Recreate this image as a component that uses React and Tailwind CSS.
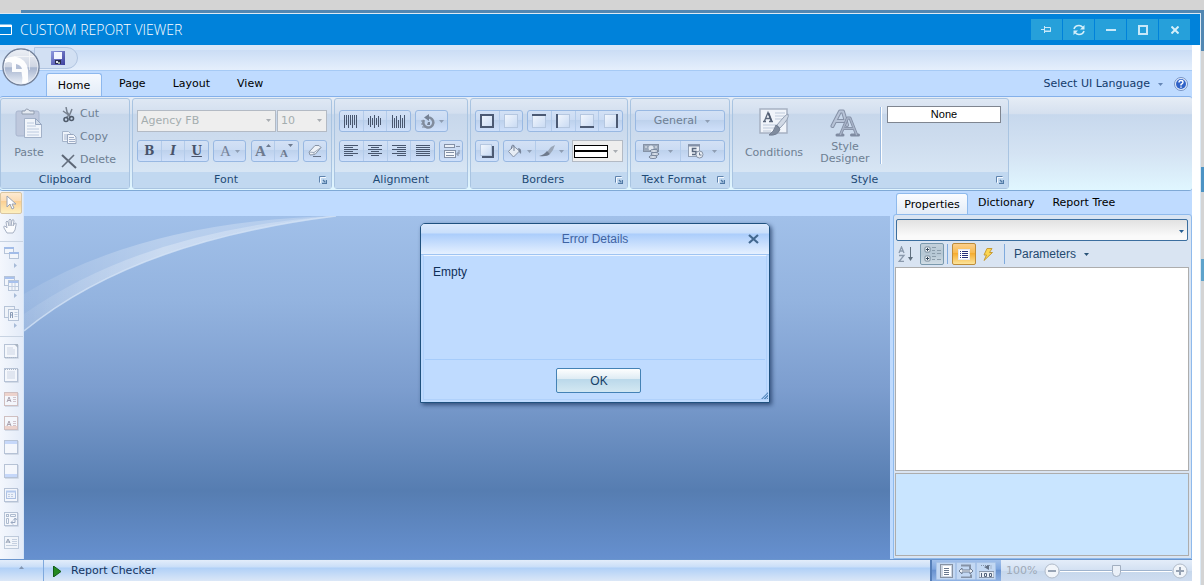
import React from "react";

const VERDANA = "font-['DejaVu_Sans',sans-serif]";
const PANEL = "bg-[linear-gradient(180deg,#dfe8f4_0%,#d3dfef_16%,#c7d7eb_17%,#cddcee_45%,#dceaf7_100%)]";

function Svg({ w, h, label, children, className = "" }) {
  return (
    <svg width={w} height={h} viewBox={`0 0 ${w} ${h}`} className={`shrink-0 ${className}`} aria-hidden={label ? undefined : true} aria-label={label}>
      {children}
    </svg>
  );
}

function Caret({ color = "#8e9db3" }) {
  return (
    <Svg w={5} h={3}>
      <path d="M0 0h5L2.500 3z" fill={color} />
    </Svg>
  );
}

function Launcher() {
  return (
    <button aria-label="More options" className="absolute right-1 flex size-2 items-center justify-center">
      <Svg w={8} h={8}>
        <path d="M.5 6.500v-6h6" fill="none" stroke="#5f83ad" />
        <path d="M1.500 7V1.500H7" fill="none" stroke="#f4f9ff" />
        <path d="M4 4l2 2M7.500 4v3.500H3" fill="none" stroke="#5079a5" strokeWidth="1.400" />
      </Svg>
    </button>
  );
}

function Group({ title, launcher, className = "", children }) {
  return (
    <section aria-label={title} className={`flex shrink-0 flex-col rounded-[3px] border border-[#a9c4e1] ${PANEL} ${className}`}>
      <div className="flex grow px-1">{children}</div>
      <div className={`relative flex h-4 items-center justify-center bg-[#c1d8f0] text-[11px] leading-4 text-[#1f4a75] ${launcher ? "pr-3" : ""}`}>
        {title}
        {launcher && <Launcher />}
      </div>
    </section>
  );
}

function Rows({ children }) {
  return <div className="flex grow flex-col gap-2 pt-[11px] pb-[10px]">{children}</div>;
}

function Cluster({ items, className = "" }) {
  return (
    <div className={`flex h-[22px] divide-x divide-[#b3cbea] rounded-[3px] border border-[#98b8e2] bg-[linear-gradient(180deg,#d3e1f5_0%,#cadbf3_45%,#bdd1ec_46%,#cfe0fa_100%)] ${className}`}>
      {items.map(([label, node]) => (
        <button key={label} aria-label={label} className="flex flex-1 items-center justify-center gap-1">
          {node}
        </button>
      ))}
    </div>
  );
}

function DisabledSelect({ label, value, className }) {
  return (
    <div className={`relative flex h-[22px] border border-[#b3bac4] bg-[#eeeeee] ${className}`}>
      <select aria-label={label} disabled className="w-full appearance-none bg-transparent px-[3px] pt-px text-[11px] text-[#a4adae] opacity-100">
        <option>{value}</option>
      </select>
      <span className="absolute top-2 right-1"><Caret color="#a9adb2" /></span>
    </div>
  );
}

function Lines({ rows }) {
  return (
    <Svg w={14} h={12}>
      {rows.map(([x, w], i) => <rect key={i} x={x} y={i * 2} width={w} height="1" fill="#48566e" />)}
    </Svg>
  );
}

function Bars({ bars }) {
  return (
    <Svg w={14} h={13}>
      {bars.map(([y, h], i) => <rect key={i} x={i * 2} y={y} width="1" height={h} fill="#48566e" />)}
    </Svg>
  );
}

function Cell({ sides }) {
  const c = "#4c5a73";
  return (
    <Svg w={14} h={14}>
      <rect x=".5" y=".5" width="13" height="13" fill="url(#cell)" stroke="#b5c7e0" />
      {sides.includes("t") && <rect width="14" height="2" fill={c} />}
      {sides.includes("b") && <rect y="12" width="14" height="2" fill={c} />}
      {sides.includes("l") && <rect width="2" height="14" fill={c} />}
      {sides.includes("r") && <rect x="12" width="2" height="14" fill={c} />}
    </Svg>
  );
}

const PasteIcon = () => (
  <Svg w={28} h={32}>
    <rect x="1" y="4" width="23" height="25" rx="2" fill="#bec8dd" stroke="#a9b6cf" />
    <path d="M7 7V4h3q1-4 5 0h4v3z" fill="#e4e9f1" stroke="#919db0" />
    <path d="M9.500 11.500h11l6 6v13h-17z" fill="#f1f5fb" stroke="#a2b1c8" />
    <path d="M20.500 11.500v6h6z" fill="#d2dcea" stroke="#98a8c2" />
    <path d="M12 16h7M12 19h9M12 22h12M12 25h12M12 28h12" stroke="#bccadf" />
  </Svg>
);
const CutIcon = () => (
  <Svg w={16} h={16}>
    <path d="M5 0l1 5 4 6M11 2L9 7l-4 4M2 4l7 5" fill="none" stroke="#77818f" strokeWidth="1.500" />
    <circle cx="5" cy="12.500" r="2" fill="none" stroke="#4f5b6b" strokeWidth="1.600" />
    <circle cx="10.500" cy="11.500" r="2" fill="none" stroke="#4f5b6b" strokeWidth="1.600" />
  </Svg>
);
const CopyIcon = () => (
  <Svg w={16} h={16}>
    <path d="M1.500 1.500h6l2 2v8h-8z" fill="#eef3fa" stroke="#a5b4ca" />
    <path d="M3 5h5M3 7h5M3 9h5" stroke="#a9b7cf" />
    <path d="M6.500 4.500h6l2.500 2.500v6.500H6.500z" fill="#f2f5fb" stroke="#97a6be" />
    <path d="M8 7.500h5M8 9.500h6M8 11.500h6" stroke="#a1b0c9" />
  </Svg>
);
const DeleteIcon = () => (
  <Svg w={16} h={16}>
    <path d="M1 2l14 13" stroke="#5c6675" strokeWidth="2" />
    <path d="M13 2L1 14" stroke="#66707f" strokeWidth="1.600" />
  </Svg>
);
const EraserIcon = () => (
  <Svg w={16} h={14}>
    <path d="M2 8l6-6.500h4l2 2-6 7-5 .5z" fill="#edf1f7" stroke="#8793a5" />
    <path d="M2 8l5 .5 7-5M7 8.500v2.500" fill="none" stroke="#9ba7b8" />
    <path d="M6 12.500h8" stroke="#667388" />
  </Svg>
);
const RotateIcon = () => (
  <Svg w={15} h={15}>
    <path d="M1 7h3M1 10h3M2 13h4" stroke="#7f8a9b" />
    <path d="M8 3.500a5 5 0 1 1-4 2.500" fill="none" stroke="#818c9d" strokeWidth="2.500" />
    <path d="M9 0v7L4 3.500zM8 8h2v3H7" fill="#758194" />
  </Svg>
);
const WrapIcon = () => (
  <Svg w={17} h={16}>
    <rect x="1.500" y="1.500" width="10" height="3" fill="#eaf0f8" stroke="#8390a6" />
    <path d="M13 3.500h4" stroke="#8390a6" />
    <rect x="1.500" y="7.500" width="11" height="7" fill="#f4f7fb" stroke="#8390a6" />
    <path d="M3 9.500h8M3 12.500h8" stroke="#8390a6" />
    <path d="M16 7v4h-2M15.500 9l-2 2 2 2" fill="none" stroke="#8390a6" />
  </Svg>
);
const BucketIcon = () => (
  <Svg w={16} h={14}>
    <path d="M6.500 2l6 5-6 6-5-5.500z" fill="#e6ecf4" stroke="#8793a7" />
    <path d="M7 7V1.500Q5 0 4.500 3v2" fill="none" stroke="#778398" />
    <path d="M11 4q4 0 3 6l-2-2z" fill="#78859b" />
  </Svg>
);
const BrushIcon = () => (
  <Svg w={16} h={12}>
    <path d="M16 0l-2 5-3 4-3-2 4-5z" fill="#9aa6b7" />
    <path d="M8 6l3 3q-3 3-11 2 5-1 8-5z" fill="#6e7a8c" />
  </Svg>
);
const CurrencyIcon = () => (
  <Svg w={17} h={16}>
    <rect x=".5" y="1.500" width="15" height="7" fill="#9ba8ba" stroke="#8592a6" />
    <circle cx="8" cy="5" r="2.500" fill="#dfe6ef" />
    <path d="M2 4h2M12 4h2" stroke="#e8edf4" />
    <ellipse cx="11" cy="8" rx="4" ry="1.500" fill="#dbe2ec" stroke="#77859b" />
    <ellipse cx="12" cy="11" rx="4" ry="1.500" fill="#dbe2ec" stroke="#77859b" />
    <ellipse cx="10" cy="14" rx="4" ry="1.500" fill="#dbe2ec" stroke="#77859b" />
  </Svg>
);
const DateIcon = () => (
  <Svg w={17} h={16}>
    <rect x="1.500" y="1.500" width="11" height="12" fill="#edf1f7" stroke="#92a0b5" />
    <path d="M1 2.500h12" stroke="#8390a7" strokeWidth="2" />
    <path d="M9.500 5.500h-4v3h3.500v3H5" fill="none" stroke="#5a687e" strokeWidth="1.500" />
    <circle cx="12.500" cy="11.500" r="3.500" fill="#e8edf4" stroke="#8794a8" />
    <path d="M12.500 9.500v2.500h2" fill="none" stroke="#6b7990" />
  </Svg>
);
const ConditionsIcon = () => (
  <Svg w={30} h={29}>
    <rect x="1" y="1" width="27" height="24" fill="#f0f4fa" stroke="#a6b1c2" strokeWidth="1.500" />
    <path d="M4 13.500h3M10 13.500h4M5.500 13L9 4.500 12.500 13M7 10.500h4" fill="none" stroke="#5d697d" strokeWidth="1.300" />
    <path d="M9.500 5l3 8" stroke="#4f5b70" strokeWidth="1.800" />
    <path d="M16 5h10M16 8h10M16 11h8M4 17h14M4 20h11M4 23h8" stroke="#bdc9da" />
    <path d="M29 6q2 4-8 14l-3-3Q27 6 29 6z" fill="#d1d9e5" stroke="#93a0b3" />
    <path d="M17 17l4 4q-2 7-11 6 5-3 7-10z" fill="#808c9e" stroke="#707c90" />
  </Svg>
);
const StyleIcon = () => (
  <Svg w={30} h={29}>
    <g fill="none" strokeLinecap="round" strokeLinejoin="round">
      <path d="M2.500 18L10 3.500h3L17 17M5.500 13h9" stroke="#8591a7" strokeWidth="4" />
      <path d="M2.500 18L10 3.500h3L17 17M5.500 13h9" stroke="#b7c3d7" strokeWidth="2" />
      <path d="M10.500 26.500L17.500 10h2.500L26.500 26.500M13.500 20.500h10M7 27h6M21.500 27h7" stroke="#7f8ba1" strokeWidth="3" />
      <path d="M10.500 26.500L17.500 10h2.500L26.500 26.500M13.500 20.500h10" stroke="#a6b2c7" strokeWidth="1.500" />
    </g>
  </Svg>
);

function BigButton({ label, icon, className = "" }) {
  return (
    <button className={`flex shrink-0 flex-col items-center text-[11px] leading-[12px] text-[#6e7f93] ${className}`}>
      {icon}
      <span className="flex grow items-center">{label}</span>
    </button>
  );
}

function Doc({ top, bottom, children, stroke = "#a9b7cd" }) {
  return (
    <Svg w={15} h={15}>
      <rect x=".5" y=".5" width="13" height="13" fill="#f6f8fd" stroke={stroke} />
      {top && <rect x="1" y="1" width="12" height="3" fill={top} />}
      {bottom && <rect x="1" y="10" width="12" height="3" fill={bottom} />}
      <path d="M1 14.500h13.500V1" fill="none" stroke="#ccd5e3" />
      {children}
    </Svg>
  );
}
const TextMark = () => (
  <>
    <path d="M3 10l2-5 2 5M4 8.500h3" fill="none" stroke="#9a8f9c" />
    <path d="M9 5.500h3M9 7.500h3M9 9.500h3" stroke="#cbb9c0" />
  </>
);
const MiniWindow = ({ x, y }) => (
  <>
    <rect x={x + 0.5} y={y + 0.5} width="9" height="6" fill="#f4f7fc" stroke="#a9b9d0" />
    <rect x={x} y={y} width="10" height="2" fill="#91b0e4" />
  </>
);

const FLYOUTS = [
  ["Bands", <><MiniWindow x={0} y={1} /><MiniWindow x={5} y={6} /></>],
  ["Cross bands", <><rect x=".5" y=".5" width="10" height="9" fill="#f4f7fc" stroke="#a9b9d0" /><rect x="4.500" y="4.500" width="10" height="10" fill="#f4f7fc" stroke="#a9b9d0" /><path d="M1 2h9M5 6h9" stroke="#98b6eb" strokeWidth="2" /><path d="M5 10.500h9M8 7v7M11 7v7" stroke="#b6c4da" /></>],
  ["Components", <><rect x=".5" y=".5" width="10" height="11" fill="#eff3f9" stroke="#a9b9d0" /><rect x="4.500" y="3.500" width="10" height="11" fill="#f4f7fc" stroke="#a9b9d0" /><path d="M6.500 12V6.500h2V12M6.500 9h2" fill="none" stroke="#7387a6" /><path d="M10.500 6.500h3M10.500 8.500h3M10.500 10.500h3" stroke="#b6c4da" /></>],
];
const TOOLS = [
  ["Report title", <Doc><path d="M3 4h6M3 6h8M3 8h8M3 10h8" stroke="#c6cfdf" /><path d="M10 0l4 4V0z" fill="#9aa6b6" /><path d="M1 13.500h13" stroke="#9ca8ba" strokeDasharray="1 1" /></Doc>],
  ["Report summary", <Doc><path d="M3 4h8M3 6h8M3 8h8M3 10h8" stroke="#c6cfdf" /><path d="M1 1.500h13" stroke="#9ca8ba" strokeDasharray="1 1" /></Doc>],
  ["Page header", <Doc stroke="#c9b3b2" top="#edcbc1"><TextMark /></Doc>],
  ["Page footer", <Doc stroke="#c9b3b2" bottom="#edcbc1"><TextMark /></Doc>],
  ["Header", <Doc top="#bdd2fa" />],
  ["Footer", <Doc bottom="#bdd2fa" />],
  ["Data", <Doc><rect x="2.500" y="3.500" width="9" height="7" fill="#edf2fb" stroke="#9eb5de" /><path d="M2 3.500h10" stroke="#a7c0ea" strokeWidth="2" /><path d="M4 6.500h6M4 8.500h6" stroke="#b7c5dc" strokeDasharray="2 1" /></Doc>],
  ["Cross tab", <Doc><rect x="2.500" y="2.500" width="2" height="2" fill="none" stroke="#9faec5" /><path d="M6.500 2.500h5v2h-5zM2.500 6.500h2v5h-2z" fill="none" stroke="#9faec5" /><path d="M7 10.500h4V6M9 8.500l-2 2 2 2M9.500 8l2-2 1 2" fill="none" stroke="#8496b2" /></Doc>],
  ["Text", <Svg w={15} h={15}><rect x=".5" y=".5" width="14" height="12" fill="#f3f6fb" stroke="#b3c1d4" /><path d="M2 7l2-4 2 4M3 6h3" fill="none" stroke="#7f8ca2" /><path d="M8 3.500h5M8 5.500h5M8 7.500h5M2 9.500h11" stroke="#bdc9da" /></Svg>],
];

function TitleBar() {
  const btn = "flex h-[21px] w-[31px] items-center justify-center bg-[#26a0da]";
  return (
    <header className="flex h-[31px] items-center bg-[#0082da] pr-[10px]">
      <Svg w={12} h={11}>
        <path d="M0 1h11.500v9.500H0" fill="none" stroke="#fff" />
        <path d="M0 2h12" stroke="#fff" strokeWidth="2" />
      </Svg>
      <h1 className="grow pl-2 font-['Open_Sans',sans-serif] text-[14px] leading-4 font-light text-white">CUSTOM REPORT VIEWER</h1>
      <div className="flex gap-px">
        <button aria-label="Pin" className={btn}><Svg w={11} h={7}><path d="M0 3.500h3M3.500 0v7M3 1.500h6.500v4H3" fill="none" stroke="#c8e8f8" /><path d="M3 5h7" stroke="#c8e8f8" /></Svg></button>
        <button aria-label="Refresh" className={btn}><Svg w={12} h={12}><path d="M1 5Q2 1.500 6 1.500q2 0 4 2M11 7q-1 3.500-5 3.500-2 0-4-2" fill="none" stroke="#d4effa" strokeWidth="1.600" /><path d="M11.500 1v4.500H7zM.5 11V6.500H5z" fill="#d4effa" /></Svg></button>
        <button aria-label="Minimize" className={btn}><Svg w={10} h={2}><rect width="10" height="2" fill="#c8e8f8" /></Svg></button>
        <button aria-label="Maximize" className={btn}><Svg w={10} h={10}><rect x="1" y="1" width="8" height="8" fill="none" stroke="#c8e8f8" strokeWidth="2" /></Svg></button>
        <button aria-label="Close window" className={btn}><Svg w={8} h={8}><path d="M.5.5l7 7M7.500.5l-7 7" stroke="#d4effa" strokeWidth="2" /></Svg></button>
      </div>
    </header>
  );
}

function QuickAccess() {
  return (
    <div className="relative h-[26px] border-b border-[#a6caf5] bg-[linear-gradient(180deg,#dae7f8_0px,#dae7f8_5px,#cbddf5_5px,#e5effc_25px)] pt-[2px]">
      <div className="ml-[34px] flex h-[22px] w-11 items-center rounded-r-full border border-[#b1c5e1] bg-[#d2e0f3] pl-4">
        <button aria-label="Save">
          <Svg w={14} h={14}>
            <rect width="14" height="14" fill="url(#disk)" />
            <rect x="3" y="1" width="8" height="7" fill="#f2f5ff" />
            <rect x="4" y="9" width="6" height="4" fill="#2a2c4c" />
            <rect x="5" y="10" width="2" height="2" fill="#dfe4f4" />
            <rect x="7" y="11" width="2" height="2" fill="#9fb0a0" />
          </Svg>
        </button>
      </div>
      <button aria-label="Application menu" className="absolute top-[3px] left-[2px]">
        <Svg w={38} h={38}>
          <circle cx="19" cy="19" r="18" fill="url(#orb)" stroke="#75839b" strokeWidth="1.500" />
          <circle cx="19" cy="19" r="16.800" fill="none" stroke="#e7ecf5" />
          <path d="M3 11q5-3 10-2.500Q25 11 26 22v12q-3 2-6 1.500Q21 30 19.500 24H10v-9q-3-2-7 0z" fill="#fff" opacity=".95" />
          <path d="M14 16q5 1 6 5h-6z" fill="#b3bfd6" />
          <path d="M12 8.500h20M27.500 3v19" stroke="#fff" opacity=".6" />
        </Svg>
      </button>
    </div>
  );
}

function RibbonTabs() {
  return (
    <nav className="flex h-[25px] items-end pl-[46px] text-[11px] text-black">
      <button className="h-[23px] w-14 rounded-t-[3px] border border-b-0 border-[#8db8ee] bg-[linear-gradient(180deg,#f6f9fe,#e3ecf7)] pt-[2px]">Home</button>
      <div className="flex h-[23px] grow items-center gap-[27px] pl-[17px]">
        <button>Page</button>
        <button>Layout</button>
        <button>View</button>
      </div>
      <button className="flex h-[23px] items-center gap-2">
        <span className="text-[#123a6b]">Select UI Language</span>
        <Caret color="#6586b5" />
      </button>
      <button aria-label="Help" className="mr-1 ml-[11px] self-center">
        <Svg w={14} h={14}>
          <circle cx="7" cy="7" r="6.500" fill="#e3edfb" stroke="#7793c4" />
          <circle cx="7" cy="7" r="5" fill="#2f62c8" />
          <path d="M5 5.500q0-2 2-2t2 1.700Q9 6.500 7 7.500v1M7 9.500v1.300" fill="none" stroke="#fff" strokeWidth="1.400" />
        </Svg>
      </button>
    </nav>
  );
}

function Ribbon() {
  const slab = "font-['DejaVu_Serif',serif] text-[12px] font-bold text-[#48536a]";
  return (
    <div className="flex gap-[2px] rounded-[3px] border-t border-b border-t-[#84b0ea] border-b-[#7fa9d6] bg-[linear-gradient(180deg,#e6edf6_0%,#d5e0ef_18%,#c7d8ed_19%,#d4e3f3_60%,#e0f6ff_100%)] py-px text-[11px]">
      <Group title="Clipboard" className="w-[130px]">
        <BigButton label="Paste" icon={<PasteIcon />} className="w-12 pt-2 pb-[6px]" />
        <div className="flex flex-col gap-2 pt-2 pl-2 text-[#6e7f93]">
          <button className="flex h-[15px] items-center gap-[3px]"><CutIcon />Cut</button>
          <button className="flex h-[15px] items-center gap-[3px]"><CopyIcon />Copy</button>
          <button className="flex h-[15px] items-center gap-[3px]"><DeleteIcon />Delete</button>
        </div>
      </Group>

      <Group title="Font" launcher className="w-[200px]">
        <Rows>
          <div className="flex gap-px">
            <DisabledSelect label="Font family" value="Agency FB" className="grow" />
            <DisabledSelect label="Font size" value="10" className="w-[50px]" />
          </div>
          <div className="flex justify-between">
            <Cluster className="w-[72px]" items={[
              ["Bold", <span className={slab}>B</span>],
              ["Italic", <span className={`${slab} italic`}>I</span>],
              ["Underline", <span className={`${slab} underline`}>U</span>],
            ]} />
            <Cluster className="w-[33px]" items={[["Font color", <><span className="font-['Liberation_Serif',serif] text-[15px] text-[#76839a]">A</span><Caret /></>]]} />
            <Cluster className="w-12" items={[
              ["Grow font", <><span className="font-['Liberation_Serif',serif] text-[15px] font-bold text-[#6d7a8f]">A</span><Svg w={5} h={3} className="-ml-1 mb-3"><path d="M0 3h5L2.500 0z" fill="#6d7a8f" /></Svg></>],
              ["Shrink font", <><span className="pt-1 font-['Liberation_Serif',serif] text-[11px] font-bold text-[#6d7a8f]">A</span><Svg w={5} h={3} className="-ml-1 mb-3"><path d="M0 0h5L2.500 3z" fill="#6d7a8f" /></Svg></>],
            ]} />
            <Cluster className="w-6" items={[["Clear formatting", <EraserIcon />]]} />
          </div>
        </Rows>
      </Group>

      <Group title="Alignment" className="w-[134px]">
        <Rows>
          <div className="flex gap-1">
            <Cluster className="w-[72px]" items={[
              ["Align top", <Bars bars={[[0, 13], [0, 10], [0, 13], [0, 10], [0, 13], [0, 10], [0, 13]]} />],
              ["Align middle", <Bars bars={[[3, 7], [1, 11], [3, 7], [0, 13], [3, 7], [1, 11], [3, 7]]} />],
              ["Align bottom", <Bars bars={[[0, 13], [3, 10], [1, 12], [5, 8], [0, 13], [3, 10], [0, 13]]} />],
            ]} />
            <Cluster className="w-[33px]" items={[["Rotate text", <><RotateIcon /><Caret /></>]]} />
          </div>
          <div className="flex gap-1">
            <Cluster className="w-24" items={[
              ["Align left", <Lines rows={[[0, 14], [0, 9], [0, 14], [0, 9], [0, 14], [0, 9]]} />],
              ["Align center", <Lines rows={[[0, 14], [3, 8], [0, 14], [3, 8], [0, 14], [3, 8]]} />],
              ["Align right", <Lines rows={[[0, 14], [5, 9], [0, 14], [5, 9], [0, 14], [5, 9]]} />],
              ["Justify", <Lines rows={[[0, 14], [0, 14], [0, 14], [0, 14], [0, 14], [0, 14]]} />],
            ]} />
            <Cluster className="w-6" items={[["Wrap text", <WrapIcon />]]} />
          </div>
        </Rows>
      </Group>

      <Group title="Borders" launcher className="w-[158px]">
        <Rows>
          <div className="flex gap-1">
            <Cluster className="w-12" items={[["All borders", <Cell sides="tblr" />], ["No borders", <Cell sides="" />]]} />
            <Cluster className="w-24" items={[
              ["Top border", <Cell sides="t" />], ["Left border", <Cell sides="l" />],
              ["Bottom border", <Cell sides="b" />], ["Right border", <Cell sides="r" />],
            ]} />
          </div>
          <div className="flex justify-between">
            <Cluster className="w-6" items={[["Shadow", <Svg w={14} h={14}><path d="M2 14h12V2h-2v10H2z" fill="#4c5a73" /><rect x=".5" y=".5" width="11" height="11" fill="url(#cell)" stroke="#b5c7e0" /></Svg>]]} />
            <Cluster className="w-[66px]" items={[["Fill color", <><BucketIcon /><Caret /></>], ["Border color", <><BrushIcon /><Caret /></>]]} />
            <button aria-label="Border style" className="flex h-[22px] w-[51px] items-center justify-between border border-[#b3bac4] bg-[#eeeeee] pr-1 pl-px">
              <Svg w={34} h={13}>
                <rect x=".5" y=".5" width="33" height="12" fill="#fff" stroke="#000" />
                <rect y="5" width="34" height="2" />
              </Svg>
              <Caret color="#a9adb2" />
            </button>
          </div>
        </Rows>
      </Group>

      <Group title="Text Format" launcher className="w-[100px]">
        <Rows>
          <button className="flex h-[22px] items-center justify-center gap-2 rounded-[3px] border border-[#98b8e2] bg-[linear-gradient(180deg,#d3e1f5_0%,#cadbf3_45%,#bdd1ec_46%,#cfe0fa_100%)] pl-1 text-[#6e7f93]">General<Caret /></button>
          <Cluster items={[["Currency format", <><CurrencyIcon /><span className="pl-1"><Caret /></span></>], ["Date format", <><DateIcon /><span className="pl-1"><Caret /></span></>]]} />
        </Rows>
      </Group>

      <Group title="Style" launcher className="w-[277px]">
        <BigButton label="Conditions" icon={<ConditionsIcon />} className="w-[74px] pt-[9px] pb-1" />
        <BigButton label={<>Style<br />Designer</>} icon={<StyleIcon />} className="w-[68px] pt-[9px] pb-1" />
        <div className="my-2 mr-[5px] ml-px w-[2px] border-r border-l border-r-white border-l-[#9dbbe0]" />
        <div className="grow pt-[7px] pr-[3px]">
          <button className="flex h-[17px] w-full items-center justify-center border border-[#7f8590] bg-white font-['Liberation_Sans',sans-serif] text-[11px] text-black">None</button>
        </div>
      </Group>
    </div>
  );
}

function Toolbox() {
  return (
    <aside aria-label="Toolbox" className="flex w-6 shrink-0 flex-col border-r border-[#d5e5f8] bg-[linear-gradient(90deg,#f4f7fd,#e3ebf8)]">
      <button aria-label="Select" className="mt-px flex h-[22px] w-[22px] items-center justify-center rounded-[2px] border border-[#d9c6a2] bg-[linear-gradient(180deg,#fdead2_0%,#fcdcb4_40%,#fbcf92_41%,#fdf0c0_100%)]">
        <Svg w={11} h={16}><path d="M1 1v11l3-3 2 5 2-1-2-4h4z" fill="#fff" stroke="#9aa3b5" /></Svg>
      </button>
      <button aria-label="Hand" className="flex h-6 w-[22px] items-center justify-center">
        <Svg w={16} h={16}><path d="M4 15l-3-5q-1-2 1-2l2 2-1-6q1-2 2 0l1 4V2q1-2 2 0v6l1-6q2-1 2 1l-1 5 2-3q2 0 1 2l-1 5-2 3z" fill="#fbfcfe" stroke="#a7b1c3" /></Svg>
      </button>
      <hr className="mt-[3px] border-[#c8d3e2]" />
      {FLYOUTS.map(([label, icon]) => (
        <button key={label} aria-label={label} className="flex h-[30px] flex-col items-center justify-end gap-[2px] pb-1">
          <Svg w={15} h={15} className="opacity-80">{icon}</Svg>
          <Svg w={3} h={5} className="ml-2"><path d="M0 0v5L3 2.500z" fill="#a7bbd8" /></Svg>
        </button>
      ))}
      <hr className="mt-1 mb-[2px] border-[#c8d3e2]" />
      {TOOLS.map(([label, icon]) => (
        <button key={label} aria-label={label} className="flex h-6 w-[22px] items-center justify-center opacity-80">{icon}</button>
      ))}
    </aside>
  );
}

function Canvas() {
  return (
    <main className="flex min-w-0 grow flex-col pt-[25px]">
      <div className="relative grow overflow-hidden bg-[linear-gradient(180deg,#a1c0e9_0%,#93b3df_25%,#7d9ecf_50%,#567db1_80%,#6690cf_100%)]">
        <svg className="absolute top-0 left-0" width="330" height="120" aria-hidden="true">
          <path d="M0 78Q120 5 310 0Q110 25 0 115z" fill="url(#swoosh)" />
          <path d="M0 98Q120 14 310 0Q110 25 0 115z" fill="url(#swoosh)" />
          <path d="M0 115Q110 25 312 0" fill="none" stroke="#dce8f8" strokeWidth="1.500" opacity=".7" />
        </svg>
      </div>
    </main>
  );
}

function Properties() {
  return (
    <aside className="flex w-[302px] shrink-0 flex-col pt-[2px] pl-[3px]">
      <div className="flex h-[21px] items-center pl-[3px] text-[11px] text-black">
        <button className="h-full w-[72px] rounded-t-[3px] border border-b-0 border-[#8fbaec] bg-[linear-gradient(180deg,#fafcff,#e3ecf7)] pt-[2px]">Properties</button>
        <button className="ml-[10px]">Dictionary</button>
        <button className="ml-[18px]">Report Tree</button>
      </div>
      <div className="flex grow flex-col rounded-t-[3px] border border-[#8fbaec] bg-[#d9e4f2] pt-1 pr-[2px] pb-[2px] pl-px">
        <div className="relative mx-px flex h-[22px] rounded-[2px] border border-[#3b6e9f] bg-[linear-gradient(180deg,#e2e2e2,#fafafa_80%)]">
          <select aria-label="Component" className="w-full appearance-none bg-transparent"><option></option></select>
          <span className="absolute top-[10px] right-[3px]"><Caret color="#285f93" /></span>
        </div>
        <div className="flex h-[26px] items-center gap-[3px] font-['Liberation_Sans',sans-serif] text-[12px] text-[#24496f]">
          <button aria-label="Sort alphabetically" className="flex h-[22px] w-[22px] items-center justify-center">
            <Svg w={16} h={16}>
              <path d="M1 7l2.500-6L6 7M2 5h3M1 9.500h5L1 15.500h5" fill="none" stroke="#8a99ac" strokeWidth="1.300" />
              <path d="M12.500 1v12" stroke="#61707f" /><path d="M10 11h5l-2.500 4z" fill="#61707f" />
            </Svg>
          </button>
          <button aria-label="Categories" className="flex h-[22px] w-6 items-center justify-center rounded-[2px] border border-[#7a99ad] bg-[linear-gradient(180deg,#c3d1db,#b5c7d4_50%,#d1dde5)]">
            <Svg w={17} h={16}>
              <rect x="1" y="1" width="5" height="5" rx="1" fill="#f7fafc" stroke="#758797" />
              <rect x="1" y="10" width="5" height="5" rx="1" fill="#f7fafc" stroke="#758797" />
              <path d="M2 3.500h3M3.500 2v3M2 12.500h3M3.500 11v3" stroke="#33475a" />
              <path d="M8 1.500h4M8 4.500h3M13 4.500h4M8 7.500h3M13 7.500h4M8 10.500h4M8 13.500h3M13 13.500h4" stroke="#8b9dab" />
            </Svg>
          </button>
          <span className="h-5 w-px bg-[#7faadd]" />
          <button aria-label="Properties view" className="ml-px flex h-[22px] w-6 items-center justify-center rounded-[2px] border border-[#bd8c3b] bg-[linear-gradient(180deg,#fbd08d,#f8b94c_45%,#f5ab2e_46%,#fce49a)]">
            <Svg w={12} h={11}><rect x=".5" y=".5" width="11" height="10" fill="#fff" stroke="#e3e7ef" /><path d="M2 2.500h1M4 2.500h6M2 4.500h1M4 4.500h6M2 6.500h1M4 6.500h6M2 8.500h1M4 8.500h6" stroke="#252f7a" /></Svg>
          </button>
          <button aria-label="Events" className="flex h-[22px] w-[18px] items-center justify-center">
            <Svg w={12} h={13}><path d="M5 .5h5L7.500 4.500h3L2 12.500 4.500 7H2z" fill="#fcd652" stroke="#c79c36" /></Svg>
          </button>
          <span className="ml-1 h-5 w-px bg-[#7faadd]" />
          <button className="ml-[6px] flex items-center gap-2">Parameters<Caret color="#285277" /></button>
        </div>
        <div className="flex-[206] border border-[#adadad] bg-white" />
        <div className="mt-[2px] flex-[82] border border-[#adadad] bg-[#c9e5ff]" />
      </div>
    </aside>
  );
}

function StatusBar() {
  const mode = "flex h-[18px] w-5 items-center justify-center rounded-[1px] border border-[#a9c4e8] bg-[#c3d8f3]";
  return (
    <footer className="flex h-[22px] items-stretch border-t border-[#6a95cd] bg-[linear-gradient(180deg,#e3edfa_0px,#c9def8_7px,#b0d0f7_8px,#dbe7f7_21px)] text-[11px]">
      <button aria-label="Expand toolbox" className="flex w-11 items-start justify-center border-r border-[#7fa9dd] pt-[6px]">
        <Svg w={5} h={3}><path d="M0 3h5L2.500 0z" fill="#8296b2" /></Svg>
      </button>
      <button className="flex items-center gap-[10px] pt-px pl-[9px] text-[#15355f]">
        <Svg w={8} h={11}><path d="M.5 0v11L8 5.500z" fill="#258a22" stroke="#145c1b" /></Svg>
        Report Checker
      </button>
      <span className="grow" />
      <div className="flex w-[71px] items-center border-l-2 border-[#567fb9] bg-[linear-gradient(180deg,#a3c1eb,#7da5df_45%,#6690ce_46%,#8fb2e4)] pl-[4px]">
        <button aria-label="Whole page" className={mode}><Svg w={14} h={14}><rect x="1.500" y=".5" width="12" height="13" fill="#cdd6e3" stroke="#8792a2" /><rect x="4" y="2" width="8" height="10" fill="#fff" /><path d="M5 4.500h5M5 6.500h5M5 8.500h5M5 10.500h5" stroke="#69788e" /></Svg></button>
        <button aria-label="Page width" className={mode}><Svg w={14} h={14}><path d="M2 1.500h9v3M2 13.500h10v-3" fill="none" stroke="#8592a6" strokeWidth="2" /><path d="M0 7l3-3v2h8V4l3 3-3 3V8H3v2z" fill="#eef2f7" stroke="#707e93" /></Svg></button>
        <button aria-label="Actual size" className={mode}><Svg w={15} h={14}><path d="M2 1.500h10v4" fill="none" stroke="#8290a4" strokeDasharray="1 1" /><path d="M5 3l5 3V1z" fill="#627085" /><path d="M0 7.500h15v6H0z" fill="#eaf0f7" stroke="#8997ab" /><path d="M2.500 9v4M5.500 9.500h2v3h-2zM10.500 9.500h2v3h-2z" fill="none" stroke="#52627b" /></Svg></button>
      </div>
      <div className="flex w-[191px] items-center bg-[linear-gradient(180deg,#e4edf9,#d2e0f2_50%,#c6d7ec_51%,#cfddf0)] pl-[5px] text-[#9ea9b7]">
        <span className="w-[38px] pt-[2px]">100%</span>
        <button aria-label="Zoom out"><Svg w={16} h={16}><circle cx="8" cy="8" r="7" fill="#f1f5fa" stroke="#b1bbc9" /><path d="M4 8h8" stroke="#97a3b4" strokeWidth="2" /></Svg></button>
        <input aria-label="Zoom" type="range" defaultValue="50" className="h-3 w-0 min-w-0 grow appearance-none bg-[linear-gradient(180deg,transparent_5px,#9fb3cd_5px,#9fb3cd_6px,#fff_6px,#fff_7px,transparent_7px)] [&::-webkit-slider-thumb]:h-3 [&::-webkit-slider-thumb]:w-[9px] [&::-webkit-slider-thumb]:appearance-none [&::-webkit-slider-thumb]:rounded-b-full [&::-webkit-slider-thumb]:border [&::-webkit-slider-thumb]:border-[#a2afc1] [&::-webkit-slider-thumb]:bg-[#eaf0f8]" />
        <button aria-label="Zoom in" className="mr-1"><Svg w={16} h={16}><circle cx="8" cy="8" r="7" fill="#f1f5fa" stroke="#b1bbc9" /><path d="M4 8h8M8 4v8" stroke="#97a3b4" strokeWidth="2" /></Svg></button>
      </div>
    </footer>
  );
}

function ErrorDialog() {
  return (
    <div className="pointer-events-none absolute inset-x-0 top-[178px] flex justify-center pr-[2px]">
      <div role="dialog" aria-labelledby="error-title" className="pointer-events-auto flex h-[180px] w-[350px] flex-col rounded-t-[5px] border border-[#1f517f] bg-[#bfdbff] font-['Liberation_Sans',sans-serif] text-[12px] shadow-[2px_2px_4px_rgba(15,40,80,0.65)]">
        <div className="flex h-[31px] items-center rounded-t-[4px] border-b border-[#9fc4f2] bg-[linear-gradient(180deg,#dbe9fd_0px,#c9dffb_9px,#abcdfb_10px,#e5f0ff_30px)] pr-[10px] pl-[21px]">
          <h2 id="error-title" className="grow text-center text-[#3e63a3]">Error Details</h2>
          <button aria-label="Close dialog"><Svg w={11} h={10}><path d="M1 1l9 8M10 1L1 9" stroke="#43688f" strokeWidth="2.200" /></Svg></button>
        </div>
        <div className="mx-[2px] mb-[2px] flex grow flex-col border border-[#b0d1fb] border-t-[#eef5ff]">
          <p className="grow px-[9px] pt-2 leading-4 text-[#0f2f57]">Empty</p>
          <div className="relative mx-px flex h-10 justify-center border-t border-[#a6ccfb] pt-2 pl-[6px]">
            <button className="h-[25px] w-[85px] rounded-[2px] border border-[#4482b5] bg-[linear-gradient(180deg,#fdfefe_0%,#dfecf4_42%,#bad8ea_43%,#d3e8f2_100%)] pl-[2px] text-[#173f66]">OK</button>
            <Svg w={7} h={7} className="absolute right-[-3px] bottom-0"><path d="M0 7l7-7v7z" fill="#5c8fc4" /><path d="M2 7l5-5M5 7l2-2" stroke="#bfdbff" strokeWidth=".8" /></Svg>
          </div>
        </div>
      </div>
    </div>
  );
}

export default function App() {
  return (
    <div className={`flex min-h-screen flex-col bg-[#d4d4d4] pt-[10px] ${VERDANA}`}>
      <svg width="0" height="0" className="absolute" aria-hidden="true">
        <defs>
          <linearGradient id="cell" x2="1" y2="1"><stop stopColor="#f3f7fd" /><stop offset="1" stopColor="#c8daf3" /></linearGradient>
          <linearGradient id="disk" x2="1" y2="1"><stop stopColor="#8f9be0" /><stop offset="1" stopColor="#3d3f9c" /></linearGradient>
          <linearGradient id="orb" x2="0" y2="1"><stop stopColor="#eef1f6" /><stop offset=".5" stopColor="#cfd6e3" /><stop offset=".52" stopColor="#a7b5cf" /><stop offset="1" stopColor="#edf2fa" /></linearGradient>
          <linearGradient id="swoosh"><stop stopColor="#fff" stopOpacity=".08" /><stop offset=".45" stopColor="#fff" stopOpacity=".28" /><stop offset="1" stopColor="#fff" stopOpacity=".2" /></linearGradient>
        </defs>
      </svg>
      <div className="ml-[21px] h-[3px] bg-[#5287b2]" />
      <div className="flex grow">
        <div className="flex min-w-0 grow flex-col border-t border-r border-[#dce9f4] bg-white">
          <TitleBar />
          <div className="relative mr-2 mb-1 flex grow flex-col bg-[#bfdbff]">
            <QuickAccess />
            <RibbonTabs />
            <Ribbon />
            <div className="flex grow">
              <Toolbox />
              <Canvas />
              <Properties />
            </div>
            <StatusBar />
            <ErrorDialog />
          </div>
        </div>
        <div className="w-[3px] shrink-0 bg-[linear-gradient(180deg,#5287b2_0px,#5287b2_38px,#d4d4d4_38px,#d4d4d4_154px,#4c93c4_154px,#4c93c4_179px,#d4d4d4_179px,#d4d4d4_246px,#5ea3cb_246px,#5ea3cb_268px,#d4d4d4_268px)]" />
      </div>
    </div>
  );
}
